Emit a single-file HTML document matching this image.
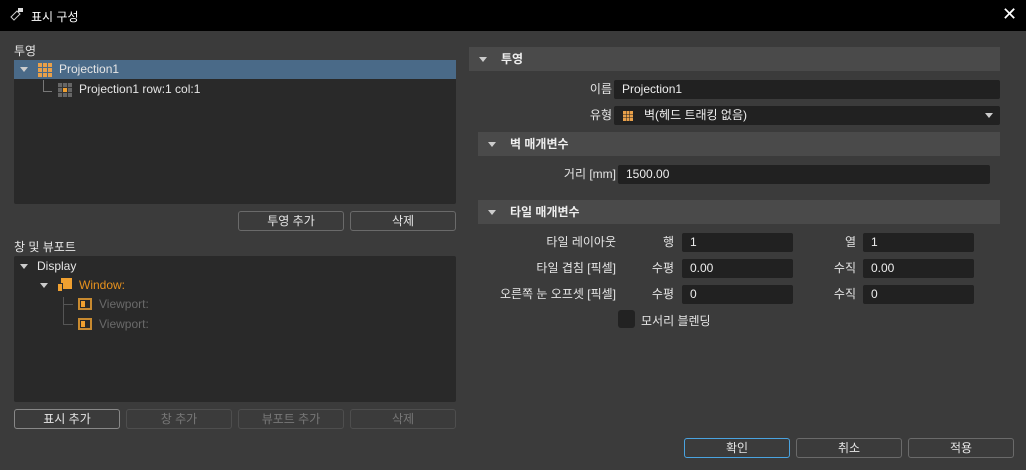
<!DOCTYPE html><html><head><meta charset="utf-8"><style>
*{margin:0;padding:0;box-sizing:border-box}
body{width:1026px;height:470px;background:#3b3b3b;font-family:"Liberation Sans","Noto Sans CJK KR",sans-serif;font-size:12px;color:#e6e6e6;position:relative;overflow:hidden}
.a{position:absolute}
.box{position:absolute;background:#292929;border-radius:2px}
.btn{position:absolute;height:20px;border:1px solid #6a6a6a;border-radius:3px;background:#3b3b3b;text-align:center;line-height:18px;color:#e6e6e6}
.dis{border-color:#4e4e4e;color:#777}
.hdr{position:absolute;background:#4a4a4a;height:24px;line-height:24px;font-weight:bold;color:#eee}
.hdr i{position:absolute;left:10px;top:10px;border-left:4px solid transparent;border-right:4px solid transparent;border-top:5px solid #ccc}
.inp{position:absolute;background:#212121;height:19px;border-radius:2px;line-height:19px;padding-left:8px;color:#eee}
.lbl{position:absolute;text-align:right;line-height:19px}
.tri{position:absolute;border-left:4px solid transparent;border-right:4px solid transparent;border-top:5px solid #ccc}
</style></head><body>
<div class="a" style="left:0;top:0;width:1026px;height:31px;background:#000"></div>
<svg class="a" style="left:9px;top:7px" width="16" height="16" viewBox="0 0 16 16"><path d="M2 10l6-6 3 3-6 6z" fill="none" stroke="#ccc"/><rect x="9" y="1" width="5" height="4" fill="#ddd"/></svg>
<div class="a" style="left:31px;top:8px;color:#fff">표시 구성</div>
<div class="a" style="left:1002px;top:4px;color:#fff;font-size:18px">✕</div>

<div class="a" style="left:14px;top:42px">투영</div>
<div class="box" style="left:14px;top:60px;width:442px;height:144px"></div>
<div class="a" style="left:14px;top:60px;width:442px;height:19px;background:#4a6a88"></div>
<div class="tri" style="left:20px;top:67px"></div>
<svg class="a" style="left:38px;top:63px" width="14" height="14"><g fill="#e8a04a"><rect x="0" y="0" width="4" height="4"/><rect x="5" y="0" width="4" height="4"/><rect x="10" y="0" width="4" height="4"/><rect x="0" y="5" width="4" height="4"/><rect x="5" y="5" width="4" height="4"/><rect x="10" y="5" width="4" height="4"/><rect x="0" y="10" width="4" height="4"/><rect x="5" y="10" width="4" height="4"/><rect x="10" y="10" width="4" height="4"/></g></svg>
<div class="a" style="left:59px;top:62px">Projection1</div>
<div class="a" style="left:43px;top:80px;width:9px;height:12px;border-left:1px solid #777;border-bottom:1px solid #777"></div>
<svg class="a" style="left:58px;top:83px" width="14" height="14"><rect x="0" y="0" width="14" height="14" fill="#666"/><rect x="4" y="4" width="6" height="6" fill="#f0a030"/><path d="M0 4.5h14M0 9.5h14M4.5 0v14M9.5 0v14" stroke="#333"/></svg>
<div class="a" style="left:79px;top:82px">Projection1 row:1 col:1</div>
<div class="btn" style="left:238px;top:211px;width:106px">투영 추가</div>
<div class="btn" style="left:350px;top:211px;width:106px">삭제</div>

<div class="a" style="left:14px;top:238px">창 및 뷰포트</div>
<div class="box" style="left:14px;top:256px;width:442px;height:146px"></div>
<div class="tri" style="left:20px;top:264px"></div>
<div class="a" style="left:37px;top:259px">Display</div>
<div class="tri" style="left:40px;top:283px"></div>
<svg class="a" style="left:57px;top:277px" width="16" height="16"><rect x="4" y="1" width="11" height="11" fill="#f0a030"/><rect x="0.5" y="6.5" width="5" height="8" fill="#f0a030" stroke="#2a2a2a"/></svg>
<div class="a" style="left:79px;top:278px;color:#e8921e">Window:</div>
<div class="a" style="left:63px;top:297px;width:10px;height:28px;border-left:1px solid #555;border-bottom:1px solid #555"></div>
<div class="a" style="left:63px;top:304px;width:10px;border-top:1px solid #555"></div>
<div class="a" style="left:78px;top:298px;width:14px;height:12px;border:2px solid #c88a30"></div><div class="a" style="left:81px;top:301px;width:4px;height:6px;background:#f0a030"></div>
<div class="a" style="left:78px;top:318px;width:14px;height:12px;border:2px solid #c88a30"></div><div class="a" style="left:81px;top:321px;width:4px;height:6px;background:#f0a030"></div>
<div class="a" style="left:99px;top:297px;color:#6a6a6a">Viewport:</div>
<div class="a" style="left:99px;top:317px;color:#6a6a6a">Viewport:</div>
<div class="btn" style="left:14px;top:409px;width:106px;border-color:#888">표시 추가</div>
<div class="btn dis" style="left:126px;top:409px;width:106px">창 추가</div>
<div class="btn dis" style="left:238px;top:409px;width:106px">뷰포트 추가</div>
<div class="btn dis" style="left:350px;top:409px;width:106px">삭제</div>

<div class="hdr" style="left:469px;top:47px;width:531px;padding-left:32px"><i></i>투영</div>
<div class="lbl" style="left:540px;top:80px;width:72px">이름</div>
<div class="inp" style="left:614px;top:80px;width:386px;height:19px;line-height:19px">Projection1</div>
<div class="lbl" style="left:540px;top:106px;width:72px">유형</div>
<div class="inp" style="left:614px;top:106px;width:386px;padding-left:30px">벽(헤드 트래킹 없음)</div>
<svg class="a" style="left:623px;top:111px" width="10" height="10"><g fill="#e8a04a"><rect x="0" y="0" width="3" height="3"/><rect x="3.5" y="0" width="3" height="3"/><rect x="7" y="0" width="3" height="3"/><rect x="0" y="3.5" width="3" height="3"/><rect x="3.5" y="3.5" width="3" height="3"/><rect x="7" y="3.5" width="3" height="3"/><rect x="0" y="7" width="3" height="3"/><rect x="3.5" y="7" width="3" height="3"/><rect x="7" y="7" width="3" height="3"/></g></svg>
<div class="tri" style="left:985px;top:113px"></div>
<div class="hdr" style="left:478px;top:132px;width:522px;padding-left:32px"><i></i>벽 매개변수</div>
<div class="lbl" style="left:500px;top:165px;width:116px">거리 [mm]</div>
<div class="inp" style="left:618px;top:165px;width:372px">1500.00</div>
<div class="hdr" style="left:478px;top:200px;width:522px;padding-left:32px"><i></i>타일 매개변수</div>
<div class="lbl" style="left:440px;top:233px;width:176px">타일 레이아웃</div>
<div class="lbl" style="left:440px;top:259px;width:176px">타일 겹침 [픽셀]</div>
<div class="lbl" style="left:440px;top:285px;width:176px">오른쪽 눈 오프셋 [픽셀]</div>
<div class="lbl" style="left:630px;top:233px;width:44px">행</div>
<div class="lbl" style="left:630px;top:259px;width:44px">수평</div>
<div class="lbl" style="left:630px;top:285px;width:44px">수평</div>
<div class="lbl" style="left:810px;top:233px;width:46px">열</div>
<div class="lbl" style="left:810px;top:259px;width:46px">수직</div>
<div class="lbl" style="left:810px;top:285px;width:46px">수직</div>
<div class="inp" style="left:682px;top:233px;width:111px">1</div>
<div class="inp" style="left:682px;top:259px;width:111px">0.00</div>
<div class="inp" style="left:682px;top:285px;width:111px">0</div>
<div class="inp" style="left:863px;top:233px;width:111px">1</div>
<div class="inp" style="left:863px;top:259px;width:111px">0.00</div>
<div class="inp" style="left:863px;top:285px;width:111px">0</div>
<div class="a" style="left:618px;top:310px;width:17px;height:18px;background:#222;border-radius:3px"></div>
<div class="a" style="left:641px;top:312px">모서리 블렌딩</div>

<div class="btn" style="left:684px;top:438px;width:106px;border-color:#4aa3e0">확인</div>
<div class="btn" style="left:796px;top:438px;width:106px">취소</div>
<div class="btn" style="left:908px;top:438px;width:106px">적용</div>
</body></html>
